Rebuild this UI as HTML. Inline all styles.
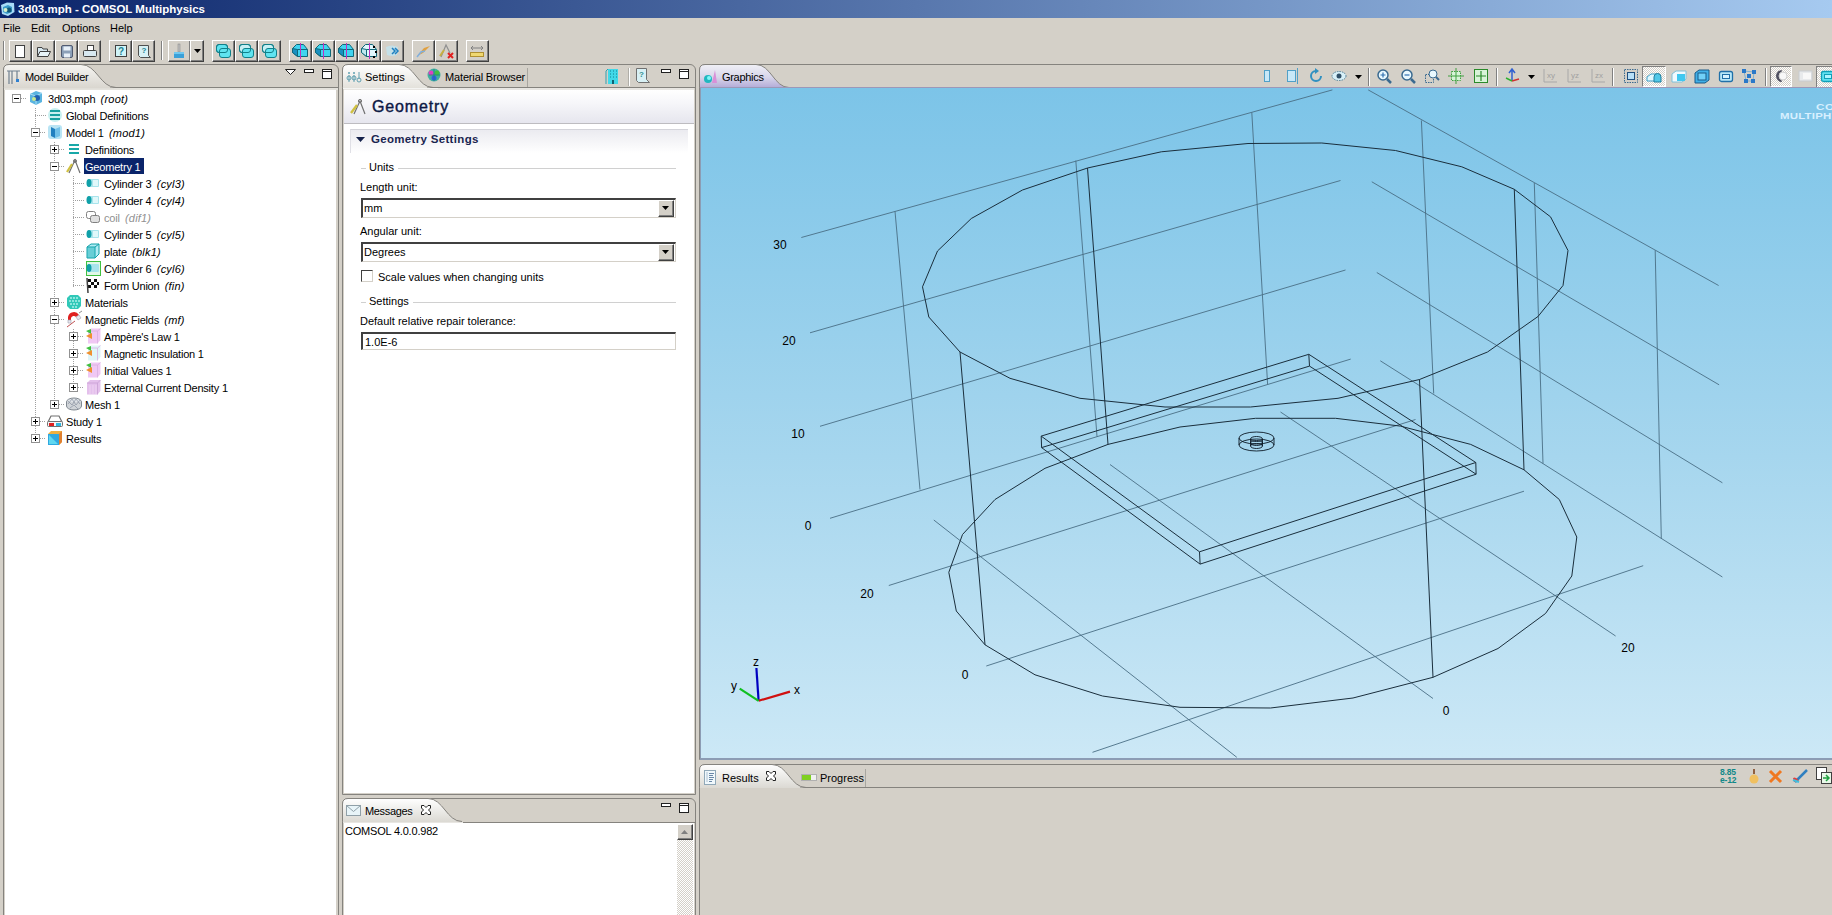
<!DOCTYPE html><html><head><meta charset="utf-8"><style>

*{box-sizing:border-box;margin:0;padding:0}
html,body{width:1832px;height:915px;overflow:hidden;background:#D4D0C8;font-family:"Liberation Sans",sans-serif;font-size:11px;color:#000}
.a{position:absolute}
.t{position:absolute;white-space:pre;line-height:13px}
.i{font-style:italic;letter-spacing:0.2px;padding-left:2px}
svg{position:absolute;overflow:visible}
.btn{position:absolute;width:23px;height:22px;border-top:1px solid #fff;border-left:1px solid #fff;border-right:1px solid #404040;border-bottom:1px solid #404040;box-shadow:inset -1px -1px 0 #808080}
.sep{position:absolute;width:2px;border-left:1px solid #808080;border-right:1px solid #fff}

</style></head><body>
<div class="a" style="left:0;top:0;width:1832px;height:18px;background:linear-gradient(to right,#0A246A,#A6CAF0)"></div>
<svg style="left:0px;top:1px" width="16" height="16"><path d="M1 4 L7 1.5 L14 2 L14.5 11 L8 15 L2 13 Z" fill="#A8DCF8"/><path d="M3 6 L8 4 L12 6 L12 11 L7 13 L3 11 Z" fill="#3A9AC8"/><circle cx="9" cy="9" r="2.5" fill="#105878"/><circle cx="5.5" cy="9" r="2" fill="#D8F0C8"/></svg>
<div class="t" style="left:18px;top:3px;color:#fff;font-weight:bold;font-size:11.5px">3d03.mph - COMSOL Multiphysics</div>
<div class="t" style="left:3px;top:22px">File</div>
<div class="t" style="left:31px;top:22px">Edit</div>
<div class="t" style="left:62px;top:22px">Options</div>
<div class="t" style="left:110px;top:22px">Help</div>
<div class="sep" style="left:3px;top:41px;height:19px"></div>
<div class="sep" style="left:161px;top:41px;height:19px"></div>
<div class="btn" style="left:9px;top:40px"></div>
<div class="btn" style="left:32px;top:40px"></div>
<div class="btn" style="left:55px;top:40px"></div>
<div class="btn" style="left:78px;top:40px"></div>
<div class="btn" style="left:109px;top:40px"></div>
<div class="btn" style="left:132px;top:40px"></div>
<div class="btn" style="left:168px;top:40px"></div>
<div class="btn" style="left:212px;top:40px"></div>
<div class="btn" style="left:235px;top:40px"></div>
<div class="btn" style="left:258px;top:40px"></div>
<div class="btn" style="left:289px;top:40px"></div>
<div class="btn" style="left:312px;top:40px"></div>
<div class="btn" style="left:335px;top:40px"></div>
<div class="btn" style="left:358px;top:40px"></div>
<div class="btn" style="left:381px;top:40px"></div>
<div class="btn" style="left:412px;top:40px"></div>
<div class="btn" style="left:435px;top:40px"></div>
<div class="btn" style="left:466px;top:40px"></div>
<div class="btn" style="left:190px;top:40px;width:14px"></div>
<svg style="left:194px;top:49px" width="7" height="4"><path d="M0 0 L7 0 L3.5 4 Z" fill="#000"/></svg>
<svg style="left:13px;top:43px" width="16" height="16"><rect x="2.5" y="2.5" width="9" height="12" fill="#fff" stroke="#404040"/></svg>
<svg style="left:36px;top:44px" width="16" height="16"><path d="M1.5 3.5 H6 L7 5 H11.5 V12.5 H1.5 Z" fill="#D8E8F0" stroke="#404040"/><path d="M1.5 12.5 L4 7.5 H14.5 L12 12.5 Z" fill="#E8F4F8" stroke="#404040"/></svg>
<svg style="left:59px;top:43px" width="16" height="16"><rect x="2.5" y="2.5" width="11" height="12" rx="1.5" fill="#8CA0B8" stroke="#505A70"/><rect x="4.5" y="3.5" width="7" height="4" fill="#E8F0F8"/><rect x="5" y="10.5" width="6" height="4" fill="#E8F0F8"/></svg>
<svg style="left:82px;top:43px" width="16" height="16"><rect x="5.5" y="2.5" width="6" height="5" fill="#fff" stroke="#404040"/><rect x="1.5" y="7.5" width="13" height="6" rx="1" fill="#D8E8F0" stroke="#404040"/></svg>
<svg style="left:113px;top:43px" width="16" height="16"><rect x="2.5" y="2.5" width="11" height="11" fill="#D0F4F8" stroke="#404040"/><text x="8" y="12" font-size="10" font-weight="bold" text-anchor="middle" fill="#208090" font-family="Liberation Sans">?</text></svg>
<svg style="left:136px;top:43px" width="16" height="16"><path d="M2.5 2.5 H12.5 V12.5 L14.5 14.5 H4.5 L2.5 12.5 Z" fill="#D8F0F4" stroke="#505050"/><text x="8" y="10" font-size="8" font-weight="bold" text-anchor="middle" fill="#208090" font-family="Liberation Sans">?</text></svg>
<svg style="left:171px;top:43px" width="16" height="16"><rect x="7" y="1" width="2" height="8" fill="#C0C0C0" stroke="#808080" stroke-width="0.5"/><rect x="3" y="9" width="10" height="6" fill="#3AA0D8"/><rect x="3" y="9" width="10" height="2" fill="#70C8F0"/></svg>
<svg style="left:215px;top:43px" width="18" height="16"><rect x="1.5" y="1.5" width="11" height="8" rx="2.5" fill="#60E4F0" stroke="#10808A"/><rect x="4.5" y="5.5" width="11" height="9" rx="2.5" fill="#60E4F0" stroke="#10808A"/><rect x="1.5" y="1.5" width="11" height="8" rx="2.5" fill="none" stroke="#10808A"/></svg>
<svg style="left:238px;top:43px" width="18" height="16"><rect x="1.5" y="1.5" width="11" height="8" rx="2.5" fill="#C8F0F4" stroke="#10808A"/><rect x="4.5" y="5.5" width="11" height="9" rx="2.5" fill="#60E4F0" stroke="#10808A"/><rect x="1.5" y="1.5" width="11" height="8" rx="2.5" fill="none" stroke="#10808A"/></svg>
<svg style="left:261px;top:43px" width="18" height="16"><rect x="1.5" y="1.5" width="11" height="8" rx="2.5" fill="#C8F0F4" stroke="#10808A"/><rect x="4.5" y="5.5" width="11" height="9" rx="2.5" fill="#60E4F0" stroke="#10808A"/><rect x="1.5" y="1.5" width="11" height="8" rx="2.5" fill="none" stroke="#10808A"/></svg>
<svg style="left:292px;top:43px" width="16" height="16"><path d="M0.5 5.5 L4.5 1.5 H11.5 L15.5 6.5 V13.5 H5.5 L0.5 9.5 Z" fill="#40D4F0" stroke="#106878"/><path d="M0.5 5.5 L5.5 6.5 V13.5 L0.5 9.5 Z" fill="#1A90C0" stroke="#106878"/><path d="M5.5 6.5 H15.5" stroke="#106878"/><line x1="8.5" y1="0" x2="8.5" y2="16" stroke="#C030C0"/></svg>
<svg style="left:315px;top:43px" width="16" height="16"><path d="M0.5 5.5 L4.5 1.5 H11.5 L15.5 6.5 V13.5 H5.5 L0.5 9.5 Z" fill="#40D4F0" stroke="#106878"/><path d="M0.5 5.5 L5.5 6.5 V13.5 L0.5 9.5 Z" fill="#1A90C0" stroke="#106878"/><path d="M5.5 6.5 H15.5" stroke="#106878"/><line x1="8.5" y1="0" x2="8.5" y2="16" stroke="#C030C0"/></svg>
<svg style="left:338px;top:43px" width="16" height="16"><path d="M0.5 5.5 L4.5 1.5 H11.5 L15.5 6.5 V13.5 H5.5 L0.5 9.5 Z" fill="#40D4F0" stroke="#106878"/><path d="M0.5 5.5 L5.5 6.5 V13.5 L0.5 9.5 Z" fill="#1A90C0" stroke="#106878"/><path d="M5.5 6.5 H15.5" stroke="#106878"/><line x1="8.5" y1="0" x2="8.5" y2="16" stroke="#C030C0"/></svg>
<svg style="left:361px;top:43px" width="16" height="16"><path d="M0.5 5.5 L4.5 1.5 H11.5 L15.5 6.5 V13.5 H5.5 L0.5 9.5 Z" fill="#E0F8FC" stroke="#106878"/><path d="M0.5 5.5 L5.5 6.5 V13.5 L0.5 9.5 Z" fill="#C0E8F0" stroke="#106878"/><path d="M5.5 6.5 H15.5" stroke="#106878"/><line x1="8.5" y1="0" x2="8.5" y2="16" stroke="#C030C0"/><rect x="12" y="3" width="2" height="2" fill="#000"/><rect x="14" y="8" width="2" height="2" fill="#000"/><rect x="12" y="13" width="2" height="2" fill="#000"/></svg>
<svg style="left:384px;top:43px" width="16" height="16"><path d="M2 4 Q8 1 14 4 L13 12 Q8 14 3 12 Z" fill="#C0E4F0" opacity="0.8"/><path d="M8 5 L11 8 L8 11 M11 5 L14 8 L11 11" fill="none" stroke="#2080C0" stroke-width="1.5"/></svg>
<svg style="left:415px;top:43px" width="16" height="16"><path d="M2 13 L9 5 L15 3 L8 10 Z" fill="#E0A040"/><path d="M2 14 L6 9 L10 8" fill="none" stroke="#80B0E0" stroke-width="1.5"/></svg>
<svg style="left:438px;top:43px" width="16" height="16"><path d="M3 14 L8 2 L12 10" fill="none" stroke="#909090" stroke-width="1.2"/><path d="M2 13 L6 7" stroke="#C8B040" stroke-width="2"/><path d="M10 10 L15 15 M15 10 L10 15" stroke="#E02020" stroke-width="2"/></svg>
<svg style="left:469px;top:43px" width="16" height="16"><path d="M2 5 H14 M2 5 L4 3 M2 5 L4 7 M14 5 L12 3 M14 5 L12 7" fill="none" stroke="#808080"/><rect x="1.5" y="9.5" width="13" height="4" fill="#F0D870" stroke="#B09030"/></svg>
<div class="a" style="left:3px;top:64px;width:336px;height:870px;border:1px solid #85837E;border-radius:6px 6px 0 0;background:#D4D0C8"></div>
<div class="a" style="left:4px;top:87px;width:334px;height:1px;background:#85837E"></div>
<div class="a" style="left:4px;top:88px;width:334px;height:2px;background:#E4E2DC"></div>
<div class="a" style="left:5px;top:90px;width:331px;height:830px;background:#fff"></div>
<svg style="left:3px;top:64px" width="115" height="25"><defs><linearGradient id="g1" x1="0" y1="0" x2="0" y2="1"><stop offset="0" stop-color="#F6F5F2"/><stop offset="1" stop-color="#DAD7D0"/></linearGradient></defs><path d="M0.5 23.5 V6 Q0.5 0.5 6 0.5 H78 C93.75 0.5 97.25 23.5 113 23.5 Z" fill="url(#g1)"/><path d="M0.5 23.5 V6 Q0.5 0.5 6 0.5 H78 C93.75 0.5 97.25 23.5 113 23.5" fill="none" stroke="#85837E"/></svg>
<div class="a" style="left:4px;top:87px;width:106px;height:1px;background:#DAD7D0"></div>
<div class="a" style="left:4px;top:88px;width:110px;height:1px;background:#E0DED8"></div>
<svg style="left:6px;top:69px" width="16" height="16"><path d="M1 2 H14 M3 2 V15 M6 2 V15 M11 2 V10" stroke="#708090" stroke-width="1.2"/><rect x="10" y="10" width="3" height="3" fill="#3080D0"/></svg>
<div class="t" style="left:25px;top:71px;letter-spacing:-0.3px">Model Builder</div>
<svg style="left:285px;top:69px" width="11" height="7"><path d="M0.5 0.5 H10.5 L5.5 5.5 Z" fill="#fff" stroke="#202020"/></svg>
<div class="a" style="left:304px;top:69px;width:10px;height:4px;border:1px solid #202020;background:#fff"></div>
<div class="a" style="left:322px;top:69px;width:10px;height:10px;border:1px solid #202020;background:#fff"></div>
<div class="a" style="left:323px;top:71px;width:8px;height:1px;background:#202020"></div>
<div class="a" style="left:35px;top:108px;width:1px;height:332px;background:repeating-linear-gradient(to bottom,#A0A0A0 0 1px,transparent 1px 2px)"></div>
<div class="a" style="left:54px;top:142px;width:1px;height:264px;background:repeating-linear-gradient(to bottom,#A0A0A0 0 1px,transparent 1px 2px)"></div>
<div class="a" style="left:73px;top:176px;width:1px;height:111px;background:repeating-linear-gradient(to bottom,#A0A0A0 0 1px,transparent 1px 2px)"></div>
<div class="a" style="left:73px;top:329px;width:1px;height:60px;background:repeating-linear-gradient(to bottom,#A0A0A0 0 1px,transparent 1px 2px)"></div>
<div class="a" style="left:21px;top:98px;width:6px;height:1px;background:repeating-linear-gradient(to right,#A0A0A0 0 1px,transparent 1px 2px)"></div>
<div class="a" style="left:12px;top:94px;width:9px;height:9px;border:1px solid #919191;background:#fff"></div>
<div class="a" style="left:14px;top:98px;width:5px;height:1px;background:#000"></div>
<svg style="left:28px;top:90px" width="16" height="16"><path d="M2 4 L8 1 L14 3 L14 12 L8 15 L2 12 Z" fill="#5AB4E0"/><path d="M2 4 L8 6 L14 3 M8 6 V15" stroke="#A8DCF4" fill="none"/><circle cx="9" cy="8" r="3" fill="#2060B0"/><circle cx="6" cy="9" r="2" fill="#C8E890"/></svg>
<div class="t" style="left:48px;top:93px;color:#000;letter-spacing:-0.2px">3d03.mph<span class="i"> (root)</span></div>
<div class="a" style="left:35px;top:115px;width:11px;height:1px;background:repeating-linear-gradient(to right,#A0A0A0 0 1px,transparent 1px 2px)"></div>
<svg style="left:47px;top:107px" width="16" height="16"><circle cx="8" cy="8" r="7" fill="#C8F0F0"/><path d="M3 4 H13 M3 8 H13 M3 12 H13" stroke="#18A0A0" stroke-width="2"/></svg>
<div class="t" style="left:66px;top:110px;color:#000;letter-spacing:-0.2px">Global Definitions<span class="i"></span></div>
<div class="a" style="left:40px;top:132px;width:6px;height:1px;background:repeating-linear-gradient(to right,#A0A0A0 0 1px,transparent 1px 2px)"></div>
<div class="a" style="left:31px;top:128px;width:9px;height:9px;border:1px solid #919191;background:#fff"></div>
<div class="a" style="left:33px;top:132px;width:5px;height:1px;background:#000"></div>
<svg style="left:47px;top:124px" width="16" height="16"><rect x="1" y="1" width="14" height="14" rx="3" fill="#B8E4F4"/><path d="M4 3 L8 5 V14 L4 12 Z" fill="#2080C0"/><path d="M8 5 L13 3 V12 L8 14 Z" fill="#70C0E8"/></svg>
<div class="t" style="left:66px;top:127px;color:#000;letter-spacing:-0.2px">Model 1<span class="i"> (mod1)</span></div>
<div class="a" style="left:59px;top:149px;width:6px;height:1px;background:repeating-linear-gradient(to right,#A0A0A0 0 1px,transparent 1px 2px)"></div>
<div class="a" style="left:50px;top:145px;width:9px;height:9px;border:1px solid #919191;background:#fff"></div>
<div class="a" style="left:52px;top:149px;width:5px;height:1px;background:#000"></div>
<div class="a" style="left:54px;top:147px;width:1px;height:5px;background:#000"></div>
<svg style="left:66px;top:141px" width="16" height="16"><path d="M3 4 H13 M3 8 H13 M3 12 H13" stroke="#18A8A8" stroke-width="2"/></svg>
<div class="t" style="left:85px;top:144px;color:#000;letter-spacing:-0.2px">Definitions<span class="i"></span></div>
<div class="a" style="left:59px;top:166px;width:6px;height:1px;background:repeating-linear-gradient(to right,#A0A0A0 0 1px,transparent 1px 2px)"></div>
<div class="a" style="left:50px;top:162px;width:9px;height:9px;border:1px solid #919191;background:#fff"></div>
<div class="a" style="left:52px;top:166px;width:5px;height:1px;background:#000"></div>
<svg style="left:66px;top:158px" width="16" height="16"><path d="M3 15 L9 2 L14 15" fill="none" stroke="#707070" stroke-width="1.2"/><path d="M1 14 L6 6" stroke="#D0C040" stroke-width="2.2"/><circle cx="9" cy="3" r="1.5" fill="none" stroke="#707070"/></svg>
<div class="a" style="left:84px;top:158px;width:60px;height:16px;background:#0A246A"></div>
<div class="t" style="left:85px;top:161px;color:#fff;letter-spacing:-0.2px">Geometry 1<span class="i"></span></div>
<div class="a" style="left:73px;top:183px;width:11px;height:1px;background:repeating-linear-gradient(to right,#A0A0A0 0 1px,transparent 1px 2px)"></div>
<svg style="left:85px;top:175px" width="16" height="16"><rect x="3" y="4" width="11" height="8" rx="1" fill="#A8E4EC"/><ellipse cx="4" cy="8" rx="2.5" ry="4" fill="#10A0A8"/><rect x="8" y="5" width="5" height="6" fill="#E0F8FA"/></svg>
<div class="t" style="left:104px;top:178px;color:#000;letter-spacing:-0.2px">Cylinder 3<span class="i"> (cyl3)</span></div>
<div class="a" style="left:73px;top:200px;width:11px;height:1px;background:repeating-linear-gradient(to right,#A0A0A0 0 1px,transparent 1px 2px)"></div>
<svg style="left:85px;top:192px" width="16" height="16"><rect x="3" y="4" width="11" height="8" rx="1" fill="#A8E4EC"/><ellipse cx="4" cy="8" rx="2.5" ry="4" fill="#10A0A8"/><rect x="8" y="5" width="5" height="6" fill="#E0F8FA"/></svg>
<div class="t" style="left:104px;top:195px;color:#000;letter-spacing:-0.2px">Cylinder 4<span class="i"> (cyl4)</span></div>
<div class="a" style="left:73px;top:217px;width:11px;height:1px;background:repeating-linear-gradient(to right,#A0A0A0 0 1px,transparent 1px 2px)"></div>
<svg style="left:85px;top:209px" width="16" height="16"><rect x="1.5" y="2.5" width="9" height="7" rx="2" fill="#fff" stroke="#808080"/><rect x="5.5" y="6.5" width="9" height="7" rx="2" fill="#E0E0E0" stroke="#808080"/></svg>
<div class="t" style="left:104px;top:212px;color:#909090;letter-spacing:-0.2px">coil<span class="i"> (dif1)</span></div>
<div class="a" style="left:73px;top:234px;width:11px;height:1px;background:repeating-linear-gradient(to right,#A0A0A0 0 1px,transparent 1px 2px)"></div>
<svg style="left:85px;top:226px" width="16" height="16"><rect x="3" y="4" width="11" height="8" rx="1" fill="#A8E4EC"/><ellipse cx="4" cy="8" rx="2.5" ry="4" fill="#10A0A8"/><rect x="8" y="5" width="5" height="6" fill="#E0F8FA"/></svg>
<div class="t" style="left:104px;top:229px;color:#000;letter-spacing:-0.2px">Cylinder 5<span class="i"> (cyl5)</span></div>
<div class="a" style="left:73px;top:251px;width:11px;height:1px;background:repeating-linear-gradient(to right,#A0A0A0 0 1px,transparent 1px 2px)"></div>
<svg style="left:85px;top:243px" width="16" height="16"><path d="M2 4 L6 1 H14 V11 L10 15 H2 Z" fill="#B0ECF4" stroke="#10A0A8"/><path d="M2 4 H10 V15 M10 4 L14 1" fill="none" stroke="#10A0A8"/><rect x="2" y="4" width="8" height="11" fill="#20B0B8" opacity="0.5"/></svg>
<div class="t" style="left:104px;top:246px;color:#000;letter-spacing:-0.2px">plate<span class="i"> (blk1)</span></div>
<div class="a" style="left:73px;top:268px;width:11px;height:1px;background:repeating-linear-gradient(to right,#A0A0A0 0 1px,transparent 1px 2px)"></div>
<svg style="left:85px;top:260px" width="16" height="16"><rect x="1.5" y="1.5" width="14" height="14" fill="#E0F8E8" stroke="#40C040"/><rect x="3" y="4" width="11" height="8" rx="1" fill="#A8E4EC"/><ellipse cx="4" cy="8" rx="2.5" ry="4" fill="#10A0A8"/></svg>
<div class="t" style="left:104px;top:263px;color:#000;letter-spacing:-0.2px">Cylinder 6<span class="i"> (cyl6)</span></div>
<div class="a" style="left:73px;top:285px;width:11px;height:1px;background:repeating-linear-gradient(to right,#A0A0A0 0 1px,transparent 1px 2px)"></div>
<svg style="left:85px;top:277px" width="16" height="16"><path d="M3 2 L14 1 L14 10 L3 11 Z" fill="#fff"/><path d="M3 2 H6 V5 H3 Z M9 2 H12 V5 H9 Z M6 5 H9 V8 H6 Z M12 5 H14 V8 H12 Z M3 8 H6 V11 H3 Z M9 8 H12 V11 H9 Z" fill="#101010"/><path d="M2 1 L3 16" stroke="#404040" stroke-width="1.5"/></svg>
<div class="t" style="left:104px;top:280px;color:#000;letter-spacing:-0.2px">Form Union<span class="i"> (fin)</span></div>
<div class="a" style="left:59px;top:302px;width:6px;height:1px;background:repeating-linear-gradient(to right,#A0A0A0 0 1px,transparent 1px 2px)"></div>
<div class="a" style="left:50px;top:298px;width:9px;height:9px;border:1px solid #919191;background:#fff"></div>
<div class="a" style="left:52px;top:302px;width:5px;height:1px;background:#000"></div>
<div class="a" style="left:54px;top:300px;width:1px;height:5px;background:#000"></div>
<svg style="left:66px;top:294px" width="16" height="16"><path d="M4 1 H12 L15 4 V12 L12 15 H4 L1 12 V4 Z" fill="#30C8B8"/><g fill="#A8F0E8"><circle cx="5" cy="4" r="1"/><circle cx="8" cy="4" r="1"/><circle cx="11" cy="4" r="1"/><circle cx="4" cy="7" r="1"/><circle cx="7" cy="7" r="1"/><circle cx="10" cy="7" r="1"/><circle cx="13" cy="7" r="1"/><circle cx="5" cy="10" r="1"/><circle cx="8" cy="10" r="1"/><circle cx="11" cy="10" r="1"/><circle cx="7" cy="13" r="1"/><circle cx="10" cy="13" r="1"/></g></svg>
<div class="t" style="left:85px;top:297px;color:#000;letter-spacing:-0.2px">Materials<span class="i"></span></div>
<div class="a" style="left:59px;top:319px;width:6px;height:1px;background:repeating-linear-gradient(to right,#A0A0A0 0 1px,transparent 1px 2px)"></div>
<div class="a" style="left:50px;top:315px;width:9px;height:9px;border:1px solid #919191;background:#fff"></div>
<div class="a" style="left:52px;top:319px;width:5px;height:1px;background:#000"></div>
<svg style="left:66px;top:311px" width="16" height="16"><path d="M2 9 L2 6 A6 6 0 0 1 13 4 L10 6 A3 3 0 0 0 5 7 V9 Z" fill="#E02020"/><path d="M2 9 H5 V12 H2 Z" fill="#E8E8F0" stroke="#A0A0B0" stroke-width="0.6"/><path d="M10 6 L13 4 L15 7 L12 9 Z" fill="#E8E8F0" stroke="#A0A0B0" stroke-width="0.6"/><path d="M1 16 L9 10" stroke="#C05050" stroke-width="1"/><path d="M13 2 L16 0" stroke="#909090"/></svg>
<div class="t" style="left:85px;top:314px;color:#000;letter-spacing:-0.2px">Magnetic Fields<span class="i"> (mf)</span></div>
<div class="a" style="left:78px;top:336px;width:6px;height:1px;background:repeating-linear-gradient(to right,#A0A0A0 0 1px,transparent 1px 2px)"></div>
<div class="a" style="left:69px;top:332px;width:9px;height:9px;border:1px solid #919191;background:#fff"></div>
<div class="a" style="left:71px;top:336px;width:5px;height:1px;background:#000"></div>
<div class="a" style="left:73px;top:334px;width:1px;height:5px;background:#000"></div>
<svg style="left:85px;top:328px" width="16" height="16"><path d="M3 3 L6 0.5 H15.5 V12 L12.5 15.5 H3 Z" fill="#F0C8F4"/><path d="M3 3 H12.5 V15.5 M12.5 3 L15.5 0.5" fill="none" stroke="#D8B0E0" stroke-width="0.8"/><path d="M1 3 L6 1 V6 Z" fill="#40C040"/><path d="M1 8 L7 5 V11 Z" fill="#F09030"/></svg>
<div class="t" style="left:104px;top:331px;color:#000;letter-spacing:-0.2px">Ampère's Law 1<span class="i"></span></div>
<div class="a" style="left:78px;top:353px;width:6px;height:1px;background:repeating-linear-gradient(to right,#A0A0A0 0 1px,transparent 1px 2px)"></div>
<div class="a" style="left:69px;top:349px;width:9px;height:9px;border:1px solid #919191;background:#fff"></div>
<div class="a" style="left:71px;top:353px;width:5px;height:1px;background:#000"></div>
<div class="a" style="left:73px;top:351px;width:1px;height:5px;background:#000"></div>
<svg style="left:85px;top:345px" width="16" height="16"><path d="M3 3 L6 0.5 H15.5 V12 L12.5 15.5 H3 Z" fill="#E0F4F8"/><path d="M3 3 H12.5 V15.5 M12.5 3 L15.5 0.5" fill="none" stroke="#D8B0E0" stroke-width="0.8"/><path d="M1 3 L6 1 V6 Z" fill="#40C040"/><path d="M1 8 L7 5 V11 Z" fill="#F09030"/></svg>
<div class="t" style="left:104px;top:348px;color:#000;letter-spacing:-0.2px">Magnetic Insulation 1<span class="i"></span></div>
<div class="a" style="left:78px;top:370px;width:6px;height:1px;background:repeating-linear-gradient(to right,#A0A0A0 0 1px,transparent 1px 2px)"></div>
<div class="a" style="left:69px;top:366px;width:9px;height:9px;border:1px solid #919191;background:#fff"></div>
<div class="a" style="left:71px;top:370px;width:5px;height:1px;background:#000"></div>
<div class="a" style="left:73px;top:368px;width:1px;height:5px;background:#000"></div>
<svg style="left:85px;top:362px" width="16" height="16"><path d="M3 3 L6 0.5 H15.5 V12 L12.5 15.5 H3 Z" fill="#F0C8F4"/><path d="M3 3 H12.5 V15.5 M12.5 3 L15.5 0.5" fill="none" stroke="#D8B0E0" stroke-width="0.8"/><path d="M1 3 L6 1 V6 Z" fill="#40C040"/><path d="M1 8 L7 5 V11 Z" fill="#F09030"/></svg>
<div class="t" style="left:104px;top:365px;color:#000;letter-spacing:-0.2px">Initial Values 1<span class="i"></span></div>
<div class="a" style="left:78px;top:387px;width:6px;height:1px;background:repeating-linear-gradient(to right,#A0A0A0 0 1px,transparent 1px 2px)"></div>
<div class="a" style="left:69px;top:383px;width:9px;height:9px;border:1px solid #919191;background:#fff"></div>
<div class="a" style="left:71px;top:387px;width:5px;height:1px;background:#000"></div>
<div class="a" style="left:73px;top:385px;width:1px;height:5px;background:#000"></div>
<svg style="left:85px;top:379px" width="16" height="16"><path d="M2 4 L5 1 H15.5 V12 L12.5 15.5 H2 Z" fill="#E4C0EC"/><path d="M2 4 H12.5 V15.5 M12.5 4 L15.5 1" fill="none" stroke="#C8A0D4" stroke-width="0.8"/><path d="M5 6 V15 M8 6 V15 M11 6 V15" stroke="#F0D8F4" stroke-width="0.8"/></svg>
<div class="t" style="left:104px;top:382px;color:#000;letter-spacing:-0.2px">External Current Density 1<span class="i"></span></div>
<div class="a" style="left:59px;top:404px;width:6px;height:1px;background:repeating-linear-gradient(to right,#A0A0A0 0 1px,transparent 1px 2px)"></div>
<div class="a" style="left:50px;top:400px;width:9px;height:9px;border:1px solid #919191;background:#fff"></div>
<div class="a" style="left:52px;top:404px;width:5px;height:1px;background:#000"></div>
<div class="a" style="left:54px;top:402px;width:1px;height:5px;background:#000"></div>
<svg style="left:66px;top:396px" width="16" height="16"><ellipse cx="8" cy="6" rx="7.5" ry="4" fill="#E0E4E8" stroke="#808890"/><path d="M0.5 6 V10 A7.5 4 0 0 0 15.5 10 V6" fill="#D0D4D8" stroke="#808890"/><path d="M2 5 L6 9 L10 3 L14 8 M2 8 L6 3 L10 9 L14 4 M4 12 L8 9 L12 13" fill="none" stroke="#8890A0" stroke-width="0.7"/></svg>
<div class="t" style="left:85px;top:399px;color:#000;letter-spacing:-0.2px">Mesh 1<span class="i"></span></div>
<div class="a" style="left:40px;top:421px;width:6px;height:1px;background:repeating-linear-gradient(to right,#A0A0A0 0 1px,transparent 1px 2px)"></div>
<div class="a" style="left:31px;top:417px;width:9px;height:9px;border:1px solid #919191;background:#fff"></div>
<div class="a" style="left:33px;top:421px;width:5px;height:1px;background:#000"></div>
<div class="a" style="left:35px;top:419px;width:1px;height:5px;background:#000"></div>
<svg style="left:47px;top:413px" width="16" height="16"><path d="M1 9 L4 3 H12 L15 9" fill="none" stroke="#707070" stroke-width="1.2"/><rect x="0.5" y="8.5" width="15" height="5" rx="1" fill="#F4F4F4" stroke="#707070"/><rect x="2" y="10" width="5" height="3" fill="#E02020"/><rect x="9" y="10" width="5" height="3" fill="#30B8E0"/></svg>
<div class="t" style="left:66px;top:416px;color:#000;letter-spacing:-0.2px">Study 1<span class="i"></span></div>
<div class="a" style="left:40px;top:438px;width:6px;height:1px;background:repeating-linear-gradient(to right,#A0A0A0 0 1px,transparent 1px 2px)"></div>
<div class="a" style="left:31px;top:434px;width:9px;height:9px;border:1px solid #919191;background:#fff"></div>
<div class="a" style="left:33px;top:438px;width:5px;height:1px;background:#000"></div>
<div class="a" style="left:35px;top:436px;width:1px;height:5px;background:#000"></div>
<svg style="left:47px;top:430px" width="16" height="16"><path d="M1 4 L4 1 H15 V12 L12 15 H1 Z" fill="#F0B040"/><path d="M1 4 H12 V15 H1 Z" fill="#30A8E0"/><path d="M2 5 L11 14 H2 Z" fill="#60D8F0"/><path d="M12 4 L15 1 V12 L12 15 Z" fill="#E08030"/></svg>
<div class="t" style="left:66px;top:433px;color:#000;letter-spacing:-0.2px">Results<span class="i"></span></div>
<div class="a" style="left:342px;top:64px;width:354px;height:731px;border:1px solid #85837E;border-radius:6px 6px 0 0;background:#D4D0C8"></div>
<div class="a" style="left:343px;top:87px;width:352px;height:1px;background:#85837E"></div>
<div class="a" style="left:344px;top:88px;width:350px;height:2px;background:#E8E6E2"></div><div class="a" style="left:344px;top:90px;width:350px;height:703px;background:#fff"></div>
<svg style="left:342px;top:64px" width="93" height="25"><defs><linearGradient id="g2" x1="0" y1="0" x2="0" y2="1"><stop offset="0" stop-color="#FFFFFF"/><stop offset="1" stop-color="#E4E2DC"/></linearGradient></defs><path d="M0.5 23.5 V6 Q0.5 0.5 6 0.5 H57 C72.3 0.5 75.7 23.5 91 23.5 Z" fill="url(#g2)"/><path d="M0.5 23.5 V6 Q0.5 0.5 6 0.5 H57 C72.3 0.5 75.7 23.5 91 23.5" fill="none" stroke="#85837E"/></svg>
<div class="a" style="left:343px;top:87px;width:84px;height:1px;background:#E4E2DC"></div>
<div class="a" style="left:343px;top:88px;width:95px;height:1px;background:#F4F4F2"></div>
<div class="a" style="left:527px;top:68px;width:1px;height:19px;background:#A8A6A0"></div>
<svg style="left:346px;top:68px" width="16" height="16"><circle cx="3" cy="5" r="1" fill="#60A0B0"/><circle cx="8" cy="5" r="1" fill="#60A0B0"/><path d="M3 7 V14 M8 7 V14 M13 4 V11" stroke="#60A0B0"/><circle cx="3" cy="10" r="2" fill="none" stroke="#60A0B0"/><circle cx="8" cy="10" r="2" fill="none" stroke="#60A0B0"/><circle cx="13" cy="12" r="2" fill="none" stroke="#60A0B0"/></svg>
<div class="t" style="left:365px;top:71px">Settings</div>
<svg style="left:427px;top:68px" width="16" height="16"><circle cx="7" cy="7" r="6.5" fill="#40B0A0"/><circle cx="4" cy="5" r="2.5" fill="#E040C0"/><circle cx="10" cy="5" r="2.5" fill="#40C040"/><circle cx="7" cy="10" r="2.5" fill="#3060E0"/><path d="M2 7 H13 M7 1 V13" stroke="#208080" stroke-width="0.8"/></svg>
<div class="t" style="left:445px;top:71px;letter-spacing:-0.15px">Material Browser</div>
<svg style="left:606px;top:68px" width="16" height="17"><rect x="2" y="1" width="10" height="15" fill="#40D8E8"/><path d="M2 1 L0 3 V16" stroke="#30A0B0" fill="none"/><path d="M4 3 H5 M7 3 H8 M10 3 H11 M4 6 H5 M7 6 H8 M10 6 H11 M4 9 H5 M7 9 H8 M10 9 H11" stroke="#108090"/><rect x="6" y="12" width="2" height="4" fill="#106070"/></svg>
<div class="a" style="left:628px;top:68px;width:1px;height:18px;background:#B0AEA8"></div><div class="a" style="left:629px;top:68px;width:1px;height:18px;background:#fff"></div>
<svg style="left:636px;top:68px" width="16" height="16"><path d="M0.5 0.5 H10.5 V11.5 L13.5 14.5 H2.5 L0.5 12.5 Z" fill="#D8F0F4" stroke="#707070"/><text x="5.5" y="9" font-size="8" font-weight="bold" text-anchor="middle" fill="#309090" font-family="Liberation Sans">?</text></svg>
<div class="a" style="left:661px;top:69px;width:10px;height:4px;border:1px solid #202020;background:#fff"></div>
<div class="a" style="left:679px;top:69px;width:10px;height:10px;border:1px solid #202020;background:#fff"></div>
<div class="a" style="left:680px;top:71px;width:8px;height:1px;background:#202020"></div>
<div class="a" style="left:344px;top:90px;width:350px;height:33px;background:linear-gradient(to bottom,#FFFFFF 0%,#F6F6F9 40%,#E6E6EE 100%)"></div>
<div class="a" style="left:344px;top:123px;width:350px;height:1px;background:#BDBCC0"></div>
<svg style="left:350px;top:98px" width="17" height="18"><path d="M4 16 L10 3 L15 16" fill="none" stroke="#707070" stroke-width="1.2"/><path d="M1 15 L7 7" stroke="#D0C040" stroke-width="2.4"/><circle cx="10" cy="3" r="1.6" fill="none" stroke="#707070"/></svg>
<div class="t" style="left:372px;top:98px;font-size:16px;line-height:18px;color:#0C1844;letter-spacing:0.85px;-webkit-text-stroke:0.4px #0C1844">Geometry</div>
<div class="a" style="left:350px;top:129px;width:338px;height:24px;border-top:1px solid #D4D4DA;border-left:1px solid #E0E0E6;background:linear-gradient(to bottom,#EBEBF0,#FFFFFF)"></div>
<svg style="left:356px;top:137px" width="9" height="5"><path d="M0 0 H9 L4.5 5 Z" fill="#14214A"/></svg>
<div class="t" style="left:371px;top:133px;font-weight:bold;font-size:11.5px;color:#1A2550;letter-spacing:0.32px">Geometry Settings</div>
<div class="a" style="left:361px;top:168px;width:5px;height:1px;background:#D0D0D0"></div>
<div class="t" style="left:369px;top:161px">Units</div>
<div class="a" style="left:398px;top:168px;width:278px;height:1px;background:#D0D0D0"></div>
<div class="t" style="left:360px;top:181px">Length unit:</div>
<div class="a" style="left:361px;top:198px;width:315px;height:20px;background:#fff;border-top:2px solid #404040;border-left:2px solid #404040;border-bottom:1px solid #D4D0C8;border-right:1px solid #D4D0C8"></div>
<div class="t" style="left:364px;top:202px">mm</div>
<div class="btn" style="left:658px;top:200px;width:16px;height:17px;background:#D4D0C8"></div>
<svg style="left:662px;top:206px" width="7" height="4"><path d="M0 0 H7 L3.5 4 Z" fill="#000"/></svg>
<div class="t" style="left:360px;top:225px">Angular unit:</div>
<div class="a" style="left:361px;top:242px;width:315px;height:20px;background:#fff;border-top:2px solid #404040;border-left:2px solid #404040;border-bottom:1px solid #D4D0C8;border-right:1px solid #D4D0C8"></div>
<div class="t" style="left:364px;top:246px">Degrees</div>
<div class="btn" style="left:658px;top:244px;width:16px;height:17px;background:#D4D0C8"></div>
<svg style="left:662px;top:250px" width="7" height="4"><path d="M0 0 H7 L3.5 4 Z" fill="#000"/></svg>
<div class="a" style="left:361px;top:270px;width:12px;height:12px;background:#fff;border-top:1px solid #404040;border-left:1px solid #404040;border-bottom:1px solid #D4D0C8;border-right:1px solid #D4D0C8"></div>
<div class="t" style="left:378px;top:271px">Scale values when changing units</div>
<div class="a" style="left:361px;top:302px;width:5px;height:1px;background:#D0D0D0"></div>
<div class="t" style="left:369px;top:295px">Settings</div>
<div class="a" style="left:413px;top:302px;width:263px;height:1px;background:#D0D0D0"></div>
<div class="t" style="left:360px;top:315px">Default relative repair tolerance:</div>
<div class="a" style="left:361px;top:332px;width:315px;height:18px;background:#fff;border-top:2px solid #404040;border-left:2px solid #404040;border-bottom:1px solid #D4D0C8;border-right:1px solid #D4D0C8"></div>
<div class="t" style="left:365px;top:336px">1.0E-6</div>
<div class="a" style="left:342px;top:798px;width:354px;height:130px;border:1px solid #85837E;border-radius:6px 6px 0 0;background:#D4D0C8"></div>
<div class="a" style="left:343px;top:822px;width:352px;height:1px;background:#85837E"></div>
<div class="a" style="left:344px;top:823px;width:350px;height:100px;background:#fff"></div>
<svg style="left:342px;top:798px" width="122" height="25"><defs><linearGradient id="g3" x1="0" y1="0" x2="0" y2="1"><stop offset="0" stop-color="#FFFFFF"/><stop offset="1" stop-color="#DCDAD4"/></linearGradient></defs><path d="M0.5 23.5 V6 Q0.5 0.5 6 0.5 H86 C101.3 0.5 104.7 23.5 120 23.5 Z" fill="url(#g3)"/><path d="M0.5 23.5 V6 Q0.5 0.5 6 0.5 H86 C101.3 0.5 104.7 23.5 120 23.5" fill="none" stroke="#85837E"/></svg>
<div class="a" style="left:343px;top:821px;width:113px;height:1px;background:#DCDAD4"></div>
<div class="a" style="left:343px;top:822px;width:120px;height:1px;background:#E8E6E2"></div>
<svg style="left:346px;top:803px" width="16" height="16"><rect x="0.5" y="2.5" width="14" height="10" fill="#E8F4F8" stroke="#90A0A8"/><path d="M0.5 2.5 L7.5 8.5 L14.5 2.5" fill="none" stroke="#90A0A8"/></svg>
<div class="t" style="left:365px;top:805px;letter-spacing:-0.35px">Messages</div>
<svg style="left:421px;top:805px" width="11" height="11"><path d="M0.5 0.5 H3 L5 2.5 L7 0.5 H9.5 V3 L7.5 5 L9.5 7 V9.5 H7 L5 7.5 L3 9.5 H0.5 V7 L2.5 5 L0.5 3 Z" fill="#fff" stroke="#202020" stroke-width="1"/></svg>
<div class="a" style="left:661px;top:803px;width:10px;height:4px;border:1px solid #202020;background:#fff"></div>
<div class="a" style="left:679px;top:803px;width:10px;height:10px;border:1px solid #202020;background:#fff"></div>
<div class="a" style="left:680px;top:805px;width:8px;height:1px;background:#202020"></div>
<div class="t" style="left:345px;top:825px;letter-spacing:-0.2px">COMSOL 4.0.0.982</div>
<div class="a" style="left:677px;top:824px;width:16px;height:95px;background:repeating-conic-gradient(#fff 0 25%,#D4D0C8 0 50%) 0 0/2px 2px"></div>
<div class="btn" style="left:677px;top:824px;width:16px;height:16px;background:#D4D0C8"></div>
<svg style="left:681px;top:830px" width="7" height="4"><path d="M0 4 H7 L3.5 0 Z" fill="#808080"/></svg>
<div class="a" style="left:699px;top:64px;width:1150px;height:696px;border:1px solid #85837E;border-radius:6px 6px 0 0;background:#D4D0C8"></div>
<svg style="left:699px;top:64px" width="92" height="25"><defs><linearGradient id="g4" x1="0" y1="0" x2="0" y2="1"><stop offset="0" stop-color="#F0F0F6"/><stop offset="0.55" stop-color="#D8D6EA"/><stop offset="1" stop-color="#B4ACD8"/></linearGradient></defs><path d="M0.5 23.5 V6 Q0.5 0.5 6 0.5 H57 C71.85 0.5 75.15 23.5 90 23.5 Z" fill="url(#g4)"/><path d="M0.5 23.5 V6 Q0.5 0.5 6 0.5 H57 C71.85 0.5 75.15 23.5 90 23.5" fill="none" stroke="#85837E"/></svg>
<div class="a" style="left:700px;top:87px;width:83px;height:1px;background:#B4ACD8"></div>
<svg style="left:703px;top:68px" width="16" height="16"><circle cx="5" cy="11" r="4" fill="#20B8C0"/><circle cx="6" cy="10" r="2" fill="#80F8F8"/><path d="M9 15 L12 2 L14 15 Z" fill="#D890D8"/></svg>
<div class="t" style="left:722px;top:71px;letter-spacing:-0.3px">Graphics</div>
<div class="a" style="left:700px;top:87px;width:1132px;height:1px;background:#9C98B8"></div>
<div class="a" style="left:700px;top:88px;width:1132px;height:670px;background:linear-gradient(to bottom,#7CC4E8 0%,#A6D6EE 55%,#CCE8F6 100%)"></div>
<div class="a" style="left:700px;top:758px;width:1132px;height:2px;background:#8C9CB4"></div>
<div class="a" style="left:700px;top:88px;width:1px;height:671px;background:#8C9CB4"></div>
<svg style="left:1260px;top:68px" width="16" height="16"><rect x="4.5" y="2.5" width="5" height="11" fill="#C8E8F8" stroke="#50A0C8"/></svg>
<svg style="left:1285px;top:68px" width="16" height="16"><rect x="2.5" y="2.5" width="8" height="11" fill="#C8E8F8" stroke="#50A0C8"/><path d="M12.5 0 V16" stroke="#50A0C8"/></svg>
<svg style="left:1308px;top:68px" width="16" height="16"><path d="M13 8 A5 5 0 1 1 8 3" fill="none" stroke="#3090C0" stroke-width="2"/><path d="M7 0 L11 3 L7 6 Z" fill="#3090C0"/></svg>
<svg style="left:1331px;top:68px" width="16" height="16"><ellipse cx="8" cy="8" rx="7" ry="4.5" fill="#D8F0F8" stroke="#508098" stroke-dasharray="1.5 1"/><circle cx="8" cy="8" r="2.5" fill="#305068"/></svg>
<svg style="left:1355px;top:75px" width="7" height="4"><path d="M0 0 H7 L3.5 4 Z" fill="#000"/></svg>
<div class="sep" style="left:1368px;top:68px;height:18px"></div>
<svg style="left:1376px;top:68px" width="16" height="16"><circle cx="7" cy="7" r="5" fill="#E8F8FF" stroke="#3A6A90" stroke-width="1.5"/><path d="M11 11 L15 15" stroke="#3A6A90" stroke-width="2.5"/><path d="M4.5 7 H9.5 M7 4.5 V9.5" stroke="#3070B0" stroke-width="1.2"/></svg>
<svg style="left:1400px;top:68px" width="16" height="16"><circle cx="7" cy="7" r="5" fill="#E8F8FF" stroke="#3A6A90" stroke-width="1.5"/><path d="M11 11 L15 15" stroke="#3A6A90" stroke-width="2.5"/><path d="M4.5 7 H9.5" stroke="#3070B0" stroke-width="1.2"/></svg>
<svg style="left:1424px;top:68px" width="16" height="16"><rect x="1.5" y="6.5" width="8" height="8" fill="none" stroke="#3A6A90" stroke-dasharray="1.5 1"/><circle cx="9" cy="6" r="4" fill="#E8F8FF" stroke="#3A6A90"/><path d="M12 9 L15 12" stroke="#3A6A90" stroke-width="2"/></svg>
<svg style="left:1448px;top:68px" width="16" height="16"><rect x="3.5" y="3.5" width="9" height="9" fill="#D8F4D8" stroke="#40A040" stroke-dasharray="1.5 1"/><path d="M8 0 V16 M0 8 H16" stroke="#40A040"/></svg>
<svg style="left:1473px;top:68px" width="16" height="16"><rect x="1.5" y="1.5" width="13" height="13" fill="#D8F4D8" stroke="#2A8A2A"/><path d="M8 3 V13 M3 8 H13" stroke="#2A8A2A" stroke-width="1.2"/></svg>
<div class="sep" style="left:1496px;top:68px;height:18px"></div>
<svg style="left:1504px;top:68px" width="16" height="16"><path d="M8 13 V2 M5 5 L8 1 L11 5" fill="none" stroke="#3060D0" stroke-width="1.5"/><path d="M8 13 L15 11" stroke="#D03030" stroke-width="1.5"/><path d="M8 13 L2 10" stroke="#30B030" stroke-width="1.5"/></svg>
<svg style="left:1528px;top:75px" width="7" height="4"><path d="M0 0 H7 L3.5 4 Z" fill="#000"/></svg>
<svg style="left:1542px;top:68px" width="16" height="16"><path d="M2 1 V14 H15" fill="none" stroke="#A8A8A8"/><text x="9" y="10" font-size="8" text-anchor="middle" fill="#A0A0A0" font-family="Liberation Sans">xy</text></svg>
<svg style="left:1566px;top:68px" width="16" height="16"><path d="M2 1 V14 H15" fill="none" stroke="#A8A8A8"/><text x="9" y="10" font-size="8" text-anchor="middle" fill="#A0A0A0" font-family="Liberation Sans">yz</text></svg>
<svg style="left:1590px;top:68px" width="16" height="16"><path d="M2 1 V14 H15" fill="none" stroke="#A8A8A8"/><text x="9" y="10" font-size="8" text-anchor="middle" fill="#A0A0A0" font-family="Liberation Sans">zx</text></svg>
<div class="sep" style="left:1612px;top:68px;height:18px"></div>
<svg style="left:1623px;top:68px" width="16" height="16"><rect x="1.5" y="1.5" width="13" height="13" fill="none" stroke="#3A6A90" stroke-dasharray="1.5 1"/><rect x="4.5" y="4.5" width="7" height="7" fill="#B8E0F8" stroke="#205080"/></svg>
<div class="a" style="left:1642px;top:66px;width:24px;height:21px;border-top:1px solid #808080;border-left:1px solid #808080;border-right:1px solid #fff;border-bottom:1px solid #fff;background:repeating-conic-gradient(#fff 0 25%,#D4D0C8 0 50%) 0 0/2px 2px"></div>
<svg style="left:1646px;top:68px" width="16" height="16"><path d="M1 9 L5 6 H13 V13 H1 Z" fill="#E0F8FF" stroke="#40A0C8"/><path d="M8 9 A3.5 3.5 0 0 1 15 9 V14 H8 Z" fill="#50C8E8" stroke="#2080A0"/></svg>
<svg style="left:1671px;top:68px" width="16" height="16"><path d="M1 6 L5 3 H15 V11 L11 14 H1 Z" fill="#F0FAFF" stroke="#80C0D8"/><path d="M6 6 H14 V13 H6 Z" fill="#40C8F0"/></svg>
<svg style="left:1694px;top:68px" width="16" height="16"><path d="M1 5 L5 2 H15 V12 L11 15 H1 Z" fill="#40B0E8" stroke="#1A5A88"/><rect x="4" y="5" width="8" height="7" fill="#70D0F8" stroke="#1A5A88"/></svg>
<svg style="left:1718px;top:68px" width="16" height="16"><rect x="1.5" y="3.5" width="13" height="10" rx="2" fill="#B8E8F8" stroke="#2070A8" stroke-width="1.3"/><rect x="4.5" y="6.5" width="7" height="4" fill="#D8F4FF" stroke="#2070A8"/></svg>
<svg style="left:1741px;top:68px" width="16" height="16"><path d="M3 3 L13 4 M3 3 L5 13 M13 4 L12 13 M5 13 L12 13" stroke="#80B0D0" fill="none"/><rect x="1" y="1" width="4" height="4" fill="#2A78C8"/><rect x="11" y="2" width="4" height="4" fill="#2A78C8"/><rect x="3" y="11" width="4" height="4" fill="#2A78C8"/><rect x="10" y="11" width="4" height="4" fill="#2A78C8"/><rect x="6" y="6" width="4" height="4" fill="#2A78C8"/></svg>
<div class="sep" style="left:1765px;top:68px;height:18px"></div>
<div class="a" style="left:1770px;top:66px;width:22px;height:21px;border-top:1px solid #808080;border-left:1px solid #808080;border-right:1px solid #fff;border-bottom:1px solid #fff;background:repeating-conic-gradient(#fff 0 25%,#D4D0C8 0 50%) 0 0/2px 2px"></div>
<svg style="left:1773px;top:68px" width="16" height="16"><path d="M9 2 A6 6 0 1 0 9 14 L7 8 Z" fill="#505060"/><circle cx="10" cy="8" r="4" fill="#F8F8F8" stroke="#D0D0D0"/></svg>
<svg style="left:1797px;top:68px" width="16" height="16"><rect x="2" y="3" width="13" height="10" fill="#E8EAEC" stroke="#C8CCD0"/><rect x="6" y="5" width="8" height="6" fill="#F8F8F8"/></svg>
<div class="a" style="left:1816px;top:66px;width:20px;height:21px;border-top:1px solid #808080;border-left:1px solid #808080;background:repeating-conic-gradient(#fff 0 25%,#D4D0C8 0 50%) 0 0/2px 2px"></div>
<svg style="left:1820px;top:68px" width="16" height="16"><rect x="1.5" y="3.5" width="13" height="10" rx="2" fill="#60E0F0" stroke="#10A0B8" stroke-width="1.3"/><rect x="4.5" y="6.5" width="7" height="4" fill="#B0F4FF" stroke="#10A0B8"/></svg>
<svg style="left:700px;top:88px" width="1132" height="670"><path d="M101.3 149.5 L632.4 1.9" fill="none" stroke="#4A6E84" stroke-width="0.9"/><path d="M110.0 244.8 L640.5 92.5" fill="none" stroke="#4A6E84" stroke-width="0.9"/><path d="M120.0 338.3 L645.5 182.0" fill="none" stroke="#4A6E84" stroke-width="0.9"/><path d="M130.0 430.3 L650.7 271.1" fill="none" stroke="#4A6E84" stroke-width="0.9"/><path d="M195.0 123.3 L220.0 401.5" fill="none" stroke="#4A6E84" stroke-width="0.9"/><path d="M375.8 72.6 L397.0 348.5" fill="none" stroke="#4A6E84" stroke-width="0.9"/><path d="M551.8 24.5 L567.6 296.3" fill="none" stroke="#4A6E84" stroke-width="0.9"/><path d="M668.2 1.9 L1018.6 197.5" fill="none" stroke="#4A6E84" stroke-width="0.9"/><path d="M671.8 93.8 L1019.1 296.8" fill="none" stroke="#4A6E84" stroke-width="0.9"/><path d="M676.8 184.5 L1022.4 394.8" fill="none" stroke="#4A6E84" stroke-width="0.9"/><path d="M680.3 272.8 L1022.4 489.0" fill="none" stroke="#4A6E84" stroke-width="0.9"/><path d="M721.4 32.5 L733.7 305.5" fill="none" stroke="#4A6E84" stroke-width="0.9"/><path d="M834.3 95.0 L843.0 375.5" fill="none" stroke="#4A6E84" stroke-width="0.9"/><path d="M955.2 162.3 L961.3 450.6" fill="none" stroke="#4A6E84" stroke-width="0.9"/><path d="M188.8 497.5 L715.5 331.5" fill="none" stroke="#4A6E84" stroke-width="0.9"/><path d="M286.3 578.0 L824.0 403.2" fill="none" stroke="#4A6E84" stroke-width="0.9"/><path d="M392.5 664.3 L943.2 477.7" fill="none" stroke="#4A6E84" stroke-width="0.9"/><path d="M233.8 432.0 L536.8 669.3" fill="none" stroke="#4A6E84" stroke-width="0.9"/><path d="M410.0 376.5 L733.0 610.5" fill="none" stroke="#4A6E84" stroke-width="0.9"/><path d="M580.5 324.0 L915.6 548.0" fill="none" stroke="#4A6E84" stroke-width="0.9"/><path d="M222.5 198.8 L237.5 163.0 L271.3 130.5 L322.5 102.0 L387.5 80.0 L461.3 63.8 L548.0 55.5 L621.8 55.0 L695.5 62.5 L761.8 78.8 L814.3 101.3 L850.5 128.8 L868.0 162.5 L863.0 197.5 L838.0 228.5 L787.5 264.0 L719.5 291.5 L638.0 310.3 L550.5 319.0 L465.0 319.0 L380.0 310.3 L310.0 290.3 L260.0 264.0 L228.8 229.0 Z" fill="none" stroke="#1A2E3C" stroke-width="1.0"/><path d="M248.8 484.3 L262.5 446.5 L295.0 411.5 L345.0 380.3 L408.0 356.4 L480.0 339.0 L555.5 330.3 L635.5 330.3 L700.4 338.1 L770.7 356.4 L824.0 381.8 L859.3 411.5 L876.8 449.0 L871.8 488.0 L845.5 525.5 L798.0 560.5 L733.0 589.3 L653.0 610.0 L570.5 620.0 L480.0 619.3 L402.5 608.0 L335.0 586.8 L285.0 556.8 L256.3 523.0 Z" fill="none" stroke="#1A2E3C" stroke-width="1.0"/><path d="M260.0 264.0 L285.0 556.8" fill="none" stroke="#1A2E3C" stroke-width="1.0"/><path d="M387.5 80.0 L408.0 356.4" fill="none" stroke="#1A2E3C" stroke-width="1.0"/><path d="M814.3 101.3 L824.0 381.8" fill="none" stroke="#1A2E3C" stroke-width="1.0"/><path d="M719.5 291.5 L733.0 589.3" fill="none" stroke="#1A2E3C" stroke-width="1.0"/><path d="M341.2 348.1 L608.8 266.3 L775.8 374.5 L499.5 463.8 Z" fill="none" stroke="#1A2E3C" stroke-width="1.0"/><path d="M341.6 359.6 L609.5 278.1 L776.1 386.2 L500.1 476.1 Z" fill="none" stroke="#1A2E3C" stroke-width="1.0"/><path d="M341.2 348.1 L341.6 359.6" fill="none" stroke="#1A2E3C" stroke-width="1.0"/><path d="M608.8 266.3 L609.5 278.1" fill="none" stroke="#1A2E3C" stroke-width="1.0"/><path d="M775.8 374.5 L776.1 386.2" fill="none" stroke="#1A2E3C" stroke-width="1.0"/><path d="M499.5 463.8 L500.1 476.1" fill="none" stroke="#1A2E3C" stroke-width="1.0"/><g fill="none" stroke="#0C1A26" stroke-width="0.9"><ellipse cx="556.5" cy="350" rx="17.5" ry="6"/><ellipse cx="556.5" cy="357" rx="17.5" ry="6"/><path d="M539.0 350 V357 M574.0 350 V357"/><ellipse cx="556.5" cy="351" rx="6" ry="2.5"/><ellipse cx="556.5" cy="355" rx="6" ry="2.5"/><ellipse cx="556.5" cy="358" rx="6" ry="2.5"/><path d="M550.5 351 V358 M562.5 351 V358"/></g><path d="M58.6 612.8 L56.4 580" stroke="#0000C0" stroke-width="2.2"/><path d="M58.6 612.8 L90 603.6" stroke="#D01010" stroke-width="2.2"/><path d="M58.6 612.8 L39.7 600.6" stroke="#10C020" stroke-width="2.2"/></svg>
<div class="t" style="left:760px;top:239px;width:40px;text-align:center;font-size:12px">30</div>
<div class="t" style="left:769px;top:335px;width:40px;text-align:center;font-size:12px">20</div>
<div class="t" style="left:778px;top:428px;width:40px;text-align:center;font-size:12px">10</div>
<div class="t" style="left:788px;top:520px;width:40px;text-align:center;font-size:12px">0</div>
<div class="t" style="left:847px;top:588px;width:40px;text-align:center;font-size:12px">20</div>
<div class="t" style="left:945px;top:669px;width:40px;text-align:center;font-size:12px">0</div>
<div class="t" style="left:1426px;top:705px;width:40px;text-align:center;font-size:12px">0</div>
<div class="t" style="left:1608px;top:642px;width:40px;text-align:center;font-size:12px">20</div>
<div class="t" style="left:736px;top:656px;width:40px;text-align:center;font-size:12px">z</div>
<div class="t" style="left:714px;top:680px;width:40px;text-align:center;font-size:12px">y</div>
<div class="t" style="left:777px;top:684px;width:40px;text-align:center;font-size:12px">x</div>
<div class="t" style="left:1816px;top:102px;color:#D8F0FF;font-size:9px;line-height:10px;font-weight:bold;letter-spacing:0.5px;transform:scaleX(1.3);transform-origin:0 0">COMSOL</div>
<div class="t" style="left:1780px;top:111px;color:#D8F0FF;font-size:9.5px;line-height:10px;font-weight:bold;letter-spacing:0.2px;transform:scaleX(1.2);transform-origin:0 0">MULTIPHYSICS</div>
<div class="a" style="left:699px;top:764px;width:1150px;height:171px;border:1px solid #85837E;border-radius:6px 6px 0 0;background:#D4D0C8"></div>
<div class="a" style="left:700px;top:787px;width:1132px;height:1px;background:#85837E"></div>
<svg style="left:699px;top:764px" width="109" height="25"><defs><linearGradient id="g5" x1="0" y1="0" x2="0" y2="1"><stop offset="0" stop-color="#FFFFFF"/><stop offset="1" stop-color="#DCDAD4"/></linearGradient></defs><path d="M0.5 23.5 V6 Q0.5 0.5 6 0.5 H73 C88.3 0.5 91.7 23.5 107 23.5 Z" fill="url(#g5)"/><path d="M0.5 23.5 V6 Q0.5 0.5 6 0.5 H73 C88.3 0.5 91.7 23.5 107 23.5" fill="none" stroke="#85837E"/></svg>
<div class="a" style="left:700px;top:787px;width:100px;height:1px;background:#DCDAD4"></div>
<div class="a" style="left:865px;top:769px;width:1px;height:18px;background:#A8A6A0"></div>
<svg style="left:704px;top:770px" width="13" height="16"><rect x="0.5" y="0.5" width="11" height="14" fill="#F0F8FC" stroke="#90A8B8"/><path d="M2.5 3 H3.5 M5 3.5 H10 M2.5 5 H3.5 M5 5.5 H9 M2.5 7 H3.5 M5 7.5 H10 M2.5 9 H3.5 M5 9.5 H9 M2.5 11 H3.5 M5 11.5 H8" stroke="#6A88A8"/></svg>
<div class="t" style="left:722px;top:772px">Results</div>
<svg style="left:766px;top:771px" width="11" height="11"><path d="M0.5 0.5 H3 L5 2.5 L7 0.5 H9.5 V3 L7.5 5 L9.5 7 V9.5 H7 L5 7.5 L3 9.5 H0.5 V7 L2.5 5 L0.5 3 Z" fill="#fff" stroke="#202020" stroke-width="1"/></svg>
<svg style="left:801px;top:774px" width="17" height="8"><rect x="0.5" y="0.5" width="15" height="6" fill="#F0F0F0" stroke="#B0B0B0"/><rect x="1" y="1" width="9" height="5" fill="#80D020"/></svg>
<div class="t" style="left:820px;top:772px">Progress</div>
<div class="t" style="left:1720px;top:768px;font-size:8.5px;line-height:8px;color:#108888;font-weight:bold;letter-spacing:-0.2px">8.85<br>e-12</div>
<svg style="left:1748px;top:768px" width="13" height="16"><rect x="5" y="1" width="2" height="5" fill="#906040"/><circle cx="6" cy="11" r="4.5" fill="#F0C060"/></svg>
<svg style="left:1768px;top:769px" width="16" height="16"><path d="M2 2 L13 13 M13 2 L2 13" stroke="#F07820" stroke-width="3"/></svg>
<svg style="left:1792px;top:768px" width="17" height="16"><path d="M3 14 L15 2" stroke="#3080C0" stroke-width="2.5"/><path d="M1 10 Q4 8 7 13 L2 14 Z" fill="#E04040"/><path d="M1 12 L7 14" stroke="#40C0E0" stroke-width="2"/></svg>
<svg style="left:1816px;top:767px" width="17" height="18"><rect x="0.5" y="0.5" width="10" height="12" fill="#fff" stroke="#404040"/><rect x="5.5" y="5.5" width="10" height="11" fill="#E8F8E8" stroke="#404040"/><path d="M7 11 H13 M10 8 L13 11 L10 14" fill="none" stroke="#20A040" stroke-width="1.5"/></svg>
</body></html>
